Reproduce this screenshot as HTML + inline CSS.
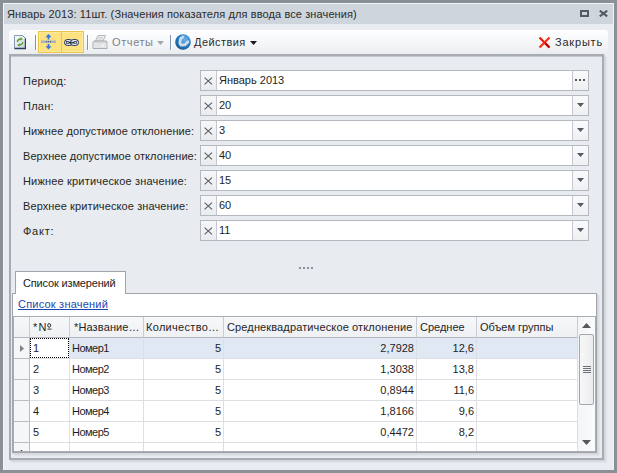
<!DOCTYPE html>
<html><head><meta charset="utf-8">
<style>
*{box-sizing:border-box;margin:0;padding:0}
html,body{width:617px;height:473px;overflow:hidden;background:#8b9097}
body{position:relative;font-family:"Liberation Sans",sans-serif;font-size:11px;color:#1e1e1e}
.a{position:absolute}
.t{position:absolute;white-space:nowrap;line-height:13px}
#win{left:3px;top:3px;width:611px;height:467px;background:#e9ecf0;border-top:1px solid #f2f4f7;border-left:1px solid #f2f4f7;border-right:1px solid #eef1f5}
#title{left:3px;top:3px;width:611px;height:21px;background:#cfd5dc;border-top:1px solid #f2f4f6;border-left:1px solid #f2f4f6;border-right:1px solid #f2f4f6}
#tb{left:9px;top:30px;width:599px;height:24px;border-radius:3px 3px 0 0;background:linear-gradient(#ffffff,#f7f8fa 45%,#eaedf0)}
.sep{position:absolute;top:35px;width:1px;height:15px;background:#8294b0;box-shadow:1px 0 0 #fff}
#panel{left:9px;top:54px;width:595px;height:406px;background:#e8ebef;border:2px solid #a7acb3;box-shadow:inset 0 1px 0 #c3c7cd,1px 1px 0 #d2d6db,2px 2px 0 #d9dce1,3px 3px 0 #e0e3e7}
.lbl{position:absolute;left:23px;white-space:nowrap;line-height:13px;color:#262626}
.ed{position:absolute;left:200px;width:389px;height:21px;background:#fff;border:1px solid #b4b9c0}
.ed .x{position:absolute;left:0;top:0;width:16px;height:19px;background:linear-gradient(#f6f7f9,#e9ebee);border-right:1px solid #c5c9cf}
.ed .x svg{position:absolute;left:3px;top:6px}
.ed .v{position:absolute;left:18px;top:3px;white-space:nowrap;line-height:13px;color:#1e1e1e}
.ed .b{position:absolute;left:371px;top:0;width:16px;height:19px;background:linear-gradient(#f9fafb,#eef0f2);border-left:1px solid #c5c9cf}
#tab{left:15px;top:271px;width:111px;height:23px;background:#fff;border:1px solid #a0a5ac;border-bottom:none}
#page{left:12px;top:293px;width:585px;height:160px;background:#fff;border:1px solid #a0a5ac;box-shadow:1px 1px 0 #d3d7dc,2px 2px 0 #dadde2,3px 3px 0 #e1e4e8}
#grid{left:13px;top:316px;width:583px;height:136px;background:#fff;border:1px solid #a8adb4;overflow:hidden}
.hd{position:absolute;top:0;height:21px;background:linear-gradient(#f7f8fa,#eef0f3);border-right:1px solid #c9cdd3;border-bottom:1px solid #b3b8bf}
.hd span{position:absolute;left:3px;top:4px;white-space:nowrap;line-height:13px;color:#252525}
.c{position:absolute;height:21px;border-right:1px solid #dcdfe4;border-bottom:1px solid #dcdfe4;background:#fff}
.c span{position:absolute;top:4px;white-space:nowrap;line-height:13px;color:#1e1e1e}
.c.ind{background:#f5f6f8;border-right-color:#b9bec4;border-bottom-color:#b9bec4}
.c.s{background:#e0e8f3}
.r span{right:2px}
.l span{left:3px}
.focus{position:absolute;left:0;top:0;right:0;bottom:0;border:1px dotted #000}
#sb{position:absolute;left:564px;top:0;width:17px;height:134px;background:linear-gradient(90deg,#f4f5f7,#fafbfc)}
</style></head><body>
<div id="win" class="a"></div>
<div id="title" class="a"></div>
<div class="t" style="left:7px;top:8px;color:#2a2a2a;letter-spacing:0.11px">Январь 2013: 11шт. (Значения показателя для ввода все значения)</div>
<!-- title icons -->
<div class="a" style="left:580px;top:10px;width:9px;height:7px;border:2px solid #55595f"></div>
<svg class="a" style="left:598px;top:10px" width="11" height="7" viewBox="0 0 11 7"><path d="M1.8 0.6 L9.2 6.4 M9.2 0.6 L1.8 6.4" stroke="#55595f" stroke-width="2"/></svg>

<div id="tb" class="a"></div>
<!-- toolbar items -->
<svg class="a" style="left:14px;top:35px" width="12" height="15" viewBox="0 0 12 15">
 <defs><linearGradient id="dg" x1="0" y1="0" x2="1" y2="1"><stop offset="0" stop-color="#ffffff"/><stop offset="1" stop-color="#c5cfde"/></linearGradient></defs>
 <path d="M0.5 0.5 H8.5 L11.5 3.5 V13.5 H0.5 Z" fill="url(#dg)"/>
 <path d="M0.5 13.5 V0.5 H8.5" fill="none" stroke="#8a99b3"/>
 <path d="M11.5 3.5 V13.5 H0.5" fill="none" stroke="#2c3f60" stroke-width="1.4"/>
 <path d="M8.5 0.5 L11.5 3.5" fill="none" stroke="#4a5b78"/>
 <path d="M8.5 0.8 V3.5 H11.2 Z" fill="#f2f5f9"/>
 <path d="M3.3 7 Q3.4 4.2 6.6 4" fill="none" stroke="#55a025" stroke-width="1.3"/>
 <path d="M6.3 2.3 L8.8 4 L6.3 5.7 Z" fill="#55a025"/>
 <path d="M8.7 7 Q8.6 9.8 5.4 10" fill="none" stroke="#55a025" stroke-width="1.3"/>
 <path d="M5.7 8.3 L3.2 10 L5.7 11.7 Z" fill="#55a025"/>
</svg>
<div class="sep" style="left:35px"></div>
<div class="a" style="left:38px;top:31px;width:46px;height:22px;background:#fde27f;border:1px solid #edc44a;box-shadow:inset 0 0 0 1px #fee9a0"></div>
<div class="a" style="left:61px;top:31px;width:1px;height:22px;background:#edc44a"></div>
<svg class="a" style="left:40px;top:33px" width="18" height="18" viewBox="0 0 18 18">
 <path d="M8.5 1 L5.5 4.2 H7.6 V6.5 H9.4 V4.2 H11.5 Z" fill="#2f76e4"/>
 <rect x="1" y="7.5" width="15" height="2.5" fill="#a3b3cb"/>
 <rect x="6" y="8.2" width="1" height="1" fill="#3b4a66"/><rect x="8" y="8.2" width="1" height="1" fill="#3b4a66"/><rect x="10" y="8.2" width="1" height="1" fill="#3b4a66"/>
 <path d="M8.5 16.5 L5.5 13.3 H7.6 V11 H9.4 V13.3 H11.5 Z" fill="#2f76e4"/>
</svg>
<svg class="a" style="left:64px;top:39px" width="15" height="7" viewBox="0 0 15 7">
 <rect x="0.5" y="0.5" width="8" height="6" rx="3" fill="#e4eaf4" stroke="#1d2d52"/>
 <rect x="6.5" y="0.5" width="8" height="6" rx="3" fill="#e4eaf4" stroke="#1d2d52"/>
 <rect x="2.6" y="2.6" width="2.4" height="1.8" fill="#f3dc80" stroke="#1d2d52" stroke-width="0.7"/>
 <rect x="10" y="2.6" width="2.4" height="1.8" fill="#f3dc80" stroke="#1d2d52" stroke-width="0.7"/>
 <path d="M5 3.7 H10" stroke="#1d2d52" stroke-width="1.3"/>
</svg>
<div class="sep" style="left:87px"></div>
<svg class="a" style="left:92px;top:35px" width="16" height="14" viewBox="0 0 16 14">
 <path d="M6 0.5 H13.5 L11 6 H3.5 Z" fill="#eceef0" stroke="#b4b7bb"/>
 <path d="M6 2.5 H11 M5.5 4 H10.5" stroke="#c8cbcf" stroke-width="0.8"/>
 <path d="M2 6 H14.5 L15 7 V13.5 H1 V7.5 Z" fill="#d6d8db" stroke="#a9acb0"/>
 <rect x="1.5" y="8" width="13" height="5" fill="#e2e4e6"/>
 <rect x="10" y="9.5" width="2" height="2" fill="#f4f5f6"/>
</svg>
<div class="t" style="left:112px;top:36px;color:#7d8288;letter-spacing:0.6px">Отчеты</div>
<svg class="a" style="left:157px;top:41px" width="7" height="4" viewBox="0 0 7 4"><path d="M0 0 H7 L3.5 4 Z" fill="#a4a8ae"/></svg>
<div class="sep" style="left:170px"></div>
<svg class="a" style="left:175px;top:34px" width="16" height="16" viewBox="0 0 16 16">
 <defs><radialGradient id="gl" cx="0.62" cy="0.35" r="0.7"><stop offset="0" stop-color="#6fb3ea"/><stop offset="0.55" stop-color="#2a83cf"/><stop offset="1" stop-color="#17548f"/></radialGradient></defs>
 <circle cx="8" cy="8" r="7.8" fill="url(#gl)"/>
 <path d="M8 3 L5.6 4.6 L4.9 9.2 L6 11 L10 10.8 L13.2 7.6" fill="none" stroke="#d3dce6" stroke-width="2.8" stroke-linejoin="round"/>
 <path d="M6.5 1.8 H9.6 L8.6 3.9 Z M12.2 5.8 L14.2 7 L13.6 9.6 Z" fill="#d3dce6"/>
</svg>
<div class="t" style="left:194px;top:36px;color:#2b2b2b;letter-spacing:0.43px">Действия</div>
<svg class="a" style="left:250px;top:41px" width="7" height="4" viewBox="0 0 7 4"><path d="M0 0 H7 L3.5 4 Z" fill="#1a1a1a"/></svg>
<svg class="a" style="left:538px;top:36px" width="13" height="13" viewBox="0 0 13 13">
 <path d="M1.5 1.5 L11.5 11.5" stroke="#e81c0c" stroke-width="2.2"/>
 <path d="M11.5 1.5 L1.5 11.5" stroke="#ff2a12" stroke-width="2.2"/>
 <path d="M7 7 L11.5 11.5" stroke="#c00a04" stroke-width="2.2"/>
</svg>
<div class="t" style="left:555px;top:36px;color:#2b2b2b;letter-spacing:0.8px">Закрыть</div>

<div id="panel" class="a"></div>

<div class="lbl" style="top:75px;letter-spacing:0.28px">Период:</div>
<div class="lbl" style="top:100px;letter-spacing:0.25px">План:</div>
<div class="lbl" style="top:125px;letter-spacing:0.1px">Нижнее допустимое отклонение:</div>
<div class="lbl" style="top:150px;letter-spacing:0.07px">Верхнее допустимое отклонение:</div>
<div class="lbl" style="top:175px;letter-spacing:0.18px">Нижнее критическое значение:</div>
<div class="lbl" style="top:200px;letter-spacing:0.1px">Верхнее критическое значение:</div>
<div class="lbl" style="top:225px;letter-spacing:0.75px">Факт:</div>

<div class="ed" style="top:70px"><div class="x"><svg width="9" height="8" viewBox="0 0 9 8"><path d="M0.6 0.6 L8 7.4 M8 0.6 L0.6 7.4" stroke="#55595f" stroke-width="1.05"/></svg></div><div class="v">Январь 2013</div>
 <div class="b"><svg class="a" style="left:2px;top:8px" width="10" height="2"><rect x="0" y="0" width="2" height="2" fill="#555"/><rect x="4" y="0" width="2" height="2" fill="#555"/><rect x="8" y="0" width="2" height="2" fill="#555"/></svg></div></div>
<div class="ed" style="top:95px"><div class="x"><svg width="9" height="8" viewBox="0 0 9 8"><path d="M0.6 0.6 L8 7.4 M8 0.6 L0.6 7.4" stroke="#55595f" stroke-width="1.05"/></svg></div><div class="v">20</div>
 <div class="b"><svg class="a" style="left:4px;top:7px" width="7" height="4"><path d="M0 0 H7 L3.5 4 Z" fill="#55595f"/></svg></div></div>
<div class="ed" style="top:120px"><div class="x"><svg width="9" height="8" viewBox="0 0 9 8"><path d="M0.6 0.6 L8 7.4 M8 0.6 L0.6 7.4" stroke="#55595f" stroke-width="1.05"/></svg></div><div class="v">3</div>
 <div class="b"><svg class="a" style="left:4px;top:7px" width="7" height="4"><path d="M0 0 H7 L3.5 4 Z" fill="#55595f"/></svg></div></div>
<div class="ed" style="top:145px"><div class="x"><svg width="9" height="8" viewBox="0 0 9 8"><path d="M0.6 0.6 L8 7.4 M8 0.6 L0.6 7.4" stroke="#55595f" stroke-width="1.05"/></svg></div><div class="v">40</div>
 <div class="b"><svg class="a" style="left:4px;top:7px" width="7" height="4"><path d="M0 0 H7 L3.5 4 Z" fill="#55595f"/></svg></div></div>
<div class="ed" style="top:170px"><div class="x"><svg width="9" height="8" viewBox="0 0 9 8"><path d="M0.6 0.6 L8 7.4 M8 0.6 L0.6 7.4" stroke="#55595f" stroke-width="1.05"/></svg></div><div class="v">15</div>
 <div class="b"><svg class="a" style="left:4px;top:7px" width="7" height="4"><path d="M0 0 H7 L3.5 4 Z" fill="#55595f"/></svg></div></div>
<div class="ed" style="top:195px"><div class="x"><svg width="9" height="8" viewBox="0 0 9 8"><path d="M0.6 0.6 L8 7.4 M8 0.6 L0.6 7.4" stroke="#55595f" stroke-width="1.05"/></svg></div><div class="v">60</div>
 <div class="b"><svg class="a" style="left:4px;top:7px" width="7" height="4"><path d="M0 0 H7 L3.5 4 Z" fill="#55595f"/></svg></div></div>
<div class="ed" style="top:220px"><div class="x"><svg width="9" height="8" viewBox="0 0 9 8"><path d="M0.6 0.6 L8 7.4 M8 0.6 L0.6 7.4" stroke="#55595f" stroke-width="1.05"/></svg></div><div class="v">11</div>
 <div class="b"><svg class="a" style="left:4px;top:7px" width="7" height="4"><path d="M0 0 H7 L3.5 4 Z" fill="#55595f"/></svg></div></div>

<svg class="a" style="left:299px;top:267px" width="14" height="2"><rect x="0" width="2" height="2" fill="#8a9098"/><rect x="4" width="2" height="2" fill="#8a9098"/><rect x="8" width="2" height="2" fill="#8a9098"/><rect x="12" width="2" height="2" fill="#8a9098"/></svg>

<div id="page" class="a"></div>
<div id="tab" class="a"></div>
<div class="t" style="left:23px;top:277px;color:#222;letter-spacing:-0.16px">Список измерений</div>
<div class="t" style="left:18px;top:298px;color:#1c47b0;text-decoration:underline;letter-spacing:0.21px">Список значений</div>

<div id="grid" class="a">
<div class="hd" style="left:0px;width:16px"></div>
<div class="hd" style="left:16px;width:40px"><span style="left:3px;letter-spacing:1.2px">*N</span><svg class="a" style="left:17px;top:6px" width="5" height="8" viewBox="0 0 5 8"><ellipse cx="2.2" cy="2.4" rx="1.5" ry="1.8" fill="none" stroke="#252525" stroke-width="1"/><rect x="0.5" y="5.6" width="4" height="1" fill="#353535"/></svg></div>
<div class="hd" style="left:56px;width:74px"><span style="left:4px;letter-spacing:0.13px">*Название…</span></div>
<div class="hd" style="left:130px;width:80px"><span style="left:2px;letter-spacing:0.3px">Количество…</span></div>
<div class="hd" style="left:210px;width:193px"><span style="letter-spacing:0.13px">Среднеквадратическое отклонение</span></div>
<div class="hd" style="left:403px;width:60px"><span>Среднее</span></div>
<div class="hd" style="left:463px;width:101px"><span>Объем группы</span></div>
<div class="c ind" style="left:0px;top:21px;width:16px"><svg class="a" style="left:6px;top:7px" width="4" height="7" viewBox="0 0 4 7"><path d="M0 0 L4 3.5 L0 7Z" fill="#7d8288"/></svg></div>
<div class="c l" style="left:16px;top:21px;width:40px"><span>1</span><div class="focus"></div></div>
<div class="c l s" style="left:56px;top:21px;width:74px"><span style="left:2px;letter-spacing:-0.5px">Номер1</span></div>
<div class="c r s" style="left:130px;top:21px;width:80px"><span>5</span></div>
<div class="c r s" style="left:210px;top:21px;width:193px"><span>2,7928</span></div>
<div class="c r s" style="left:403px;top:21px;width:60px"><span>12,6</span></div>
<div class="c l s" style="left:463px;top:21px;width:101px"></div>
<div class="c ind" style="left:0px;top:42px;width:16px"></div>
<div class="c l" style="left:16px;top:42px;width:40px"><span>2</span></div>
<div class="c l" style="left:56px;top:42px;width:74px"><span style="left:2px;letter-spacing:-0.5px">Номер2</span></div>
<div class="c r" style="left:130px;top:42px;width:80px"><span>5</span></div>
<div class="c r" style="left:210px;top:42px;width:193px"><span>1,3038</span></div>
<div class="c r" style="left:403px;top:42px;width:60px"><span>13,8</span></div>
<div class="c l" style="left:463px;top:42px;width:101px"></div>
<div class="c ind" style="left:0px;top:63px;width:16px"></div>
<div class="c l" style="left:16px;top:63px;width:40px"><span>3</span></div>
<div class="c l" style="left:56px;top:63px;width:74px"><span style="left:2px;letter-spacing:-0.5px">Номер3</span></div>
<div class="c r" style="left:130px;top:63px;width:80px"><span>5</span></div>
<div class="c r" style="left:210px;top:63px;width:193px"><span>0,8944</span></div>
<div class="c r" style="left:403px;top:63px;width:60px"><span>11,6</span></div>
<div class="c l" style="left:463px;top:63px;width:101px"></div>
<div class="c ind" style="left:0px;top:84px;width:16px"></div>
<div class="c l" style="left:16px;top:84px;width:40px"><span>4</span></div>
<div class="c l" style="left:56px;top:84px;width:74px"><span style="left:2px;letter-spacing:-0.5px">Номер4</span></div>
<div class="c r" style="left:130px;top:84px;width:80px"><span>5</span></div>
<div class="c r" style="left:210px;top:84px;width:193px"><span>1,8166</span></div>
<div class="c r" style="left:403px;top:84px;width:60px"><span>9,6</span></div>
<div class="c l" style="left:463px;top:84px;width:101px"></div>
<div class="c ind" style="left:0px;top:105px;width:16px"></div>
<div class="c l" style="left:16px;top:105px;width:40px"><span>5</span></div>
<div class="c l" style="left:56px;top:105px;width:74px"><span style="left:2px;letter-spacing:-0.5px">Номер5</span></div>
<div class="c r" style="left:130px;top:105px;width:80px"><span>5</span></div>
<div class="c r" style="left:210px;top:105px;width:193px"><span>0,4472</span></div>
<div class="c r" style="left:403px;top:105px;width:60px"><span>8,2</span></div>
<div class="c l" style="left:463px;top:105px;width:101px"></div>
<div class="c ind" style="left:0px;top:126px;width:16px"></div>
<div class="c l" style="left:16px;top:126px;width:40px"></div>
<div class="c l" style="left:56px;top:126px;width:74px"></div>
<div class="c r" style="left:130px;top:126px;width:80px"></div>
<div class="c r" style="left:210px;top:126px;width:193px"></div>
<div class="c r" style="left:403px;top:126px;width:60px"></div>
<div class="c l" style="left:463px;top:126px;width:101px"></div>
<div class="a" style="left:7px;top:133px;width:1px;height:1px;background:#3a3a3a;box-shadow:-1px 0 0 #c8c8c8,1px 0 0 #c8c8c8"></div>
<div id="sb">
<svg class="a" style="left:4px;top:6px" width="9" height="5" viewBox="0 0 9 5"><path d="M0 5 L4.5 0 L9 5Z" fill="#55585c"/></svg>
<div class="a" style="left:1px;top:17px;width:15px;height:71px;border:1px solid #a3a7ad;border-radius:2px;background:linear-gradient(90deg,#f7f7f8,#ebecee)"></div>
<div class="a" style="left:5px;top:49px;width:8px;height:1px;background:#6d7176"></div>
<div class="a" style="left:5px;top:51px;width:8px;height:1px;background:#6d7176"></div>
<div class="a" style="left:5px;top:53px;width:8px;height:1px;background:#6d7176"></div>
<div class="a" style="left:5px;top:55px;width:8px;height:1px;background:#6d7176"></div>
<svg class="a" style="left:4px;top:123px" width="9" height="5" viewBox="0 0 9 5"><path d="M0 0 L4.5 5 L9 0Z" fill="#55585c"/></svg>
</div>
</div>
</body></html>
